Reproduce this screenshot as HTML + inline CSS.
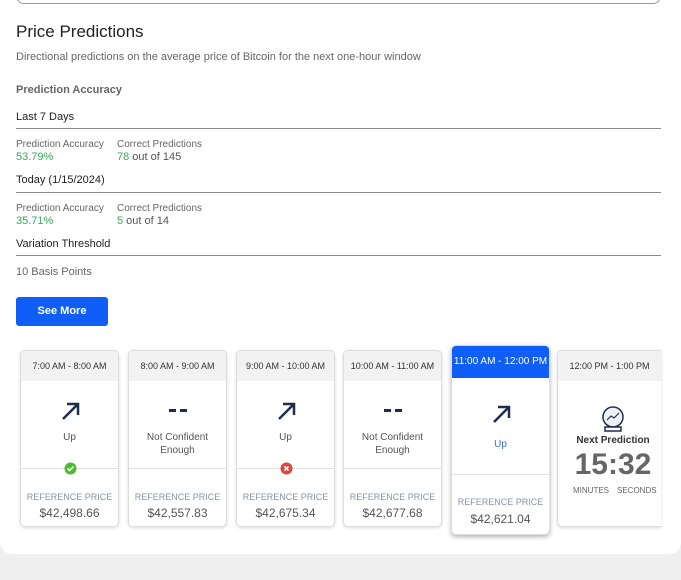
<!DOCTYPE html>
<html><head><meta charset="utf-8"><style>
*{margin:0;padding:0;box-sizing:border-box}
body{width:681px;height:580px;background:#efefef;font-family:"Liberation Sans",sans-serif;position:relative;overflow:hidden;color:#222}
.main{position:absolute;left:0;top:0;width:681px;height:554px;background:#fff;border-radius:0 0 12px 12px}
.a{position:absolute;white-space:nowrap}
.line{position:absolute;left:16px;width:645px;height:1px;background:#8a8a8a}
.sm{font-size:10px;color:#666}
.g{color:#3aa85c}
.card{position:absolute;top:350px;width:99px;height:177px;border:1px solid #ddd;border-radius:5px;background:#fff;box-shadow:0 1px 3px rgba(0,0,0,.15);overflow:hidden;text-align:center}
.hd{height:30px;background:#f2f2f2;font-size:9px;color:#333;line-height:30px}
.arrow{position:absolute;left:0;right:0;top:50px;height:20px}
.lbl{position:absolute;left:0;right:0;top:80px;font-size:10px;color:#555;line-height:13px}
.div{position:absolute;left:0;right:0;top:117px;height:1px;background:#e3e3e3}
.rp{position:absolute;left:0;right:0;top:141px;font-size:9px;color:#8a94a6}
.pr{position:absolute;left:0;right:0;top:155px;font-size:12px;color:#555}
.dash{position:absolute;left:0;right:0;top:58px;height:4px}
</style></head><body>
<div class="main">
<div style="position:absolute;left:16px;top:-20px;width:645px;height:24px;border:1px solid #999;border-radius:8px"></div>
<div class="a" style="left:16px;top:22px;font-size:17px;color:#222">Price Predictions</div>
<div class="a" style="left:16px;top:51px;font-size:11px;color:#666">Directional predictions on the average price of Bitcoin for the next one-hour window</div>
<div class="a" style="left:16px;top:84px;font-size:11px;font-weight:bold;color:#666">Prediction Accuracy</div>
<div class="a" style="left:16px;top:111px;font-size:11px;color:#222">Last 7 Days</div>
<div class="line" style="top:128px"></div>
<div class="a sm" style="left:16px;top:139px">Prediction Accuracy</div>
<div class="a sm" style="left:117px;top:139px">Correct Predictions</div>
<div class="a g" style="left:16px;top:151px;font-size:11px">53.79%</div>
<div class="a" style="left:117px;top:151px;font-size:11px;color:#555"><span class="g">78</span> out of 145</div>
<div class="a" style="left:16px;top:174px;font-size:11px;color:#222">Today (1/15/2024)</div>
<div class="line" style="top:192px"></div>
<div class="a sm" style="left:16px;top:203px">Prediction Accuracy</div>
<div class="a sm" style="left:117px;top:203px">Correct Predictions</div>
<div class="a g" style="left:16px;top:215px;font-size:11px">35.71%</div>
<div class="a" style="left:117px;top:215px;font-size:11px;color:#555"><span class="g">5</span> out of 14</div>
<div class="a" style="left:16px;top:238px;font-size:11px;color:#222">Variation Threshold</div>
<div class="line" style="top:255px"></div>
<div class="a" style="left:16px;top:266px;font-size:11px;color:#666">10 Basis Points</div>
<div class="a" style="left:16px;top:297px;width:92px;height:29px;background:#0f5ef7;border-radius:3px;color:#fff;font-size:11px;font-weight:bold;text-align:center;line-height:29px">See More</div>

<div class="card" style="left:20px"><div class="hd">7:00 AM - 8:00 AM</div>
<svg class="arrow" viewBox="0 0 99 20"><path d="M42 18 L56 4 M46 3 H57 V14" stroke="#1f2d4d" stroke-width="2.5" fill="none"/></svg>
<div class="lbl">Up</div><div class="div"></div>
<svg style="position:absolute;left:43px;top:111px" width="13" height="13"><circle cx="6.5" cy="6.5" r="6" fill="#4cbb2f"/><path d="M3.5 6.5l2 2 4-4" stroke="#fff" stroke-width="1.6" fill="none"/></svg>
<div class="rp">REFERENCE PRICE</div><div class="pr">$42,498.66</div></div>

<div class="card" style="left:128px"><div class="hd">8:00 AM - 9:00 AM</div>
<svg class="dash" viewBox="0 0 99 4"><rect x="40" y="0" width="7" height="3" fill="#1f2d4d"/><rect x="51" y="0" width="7" height="3" fill="#1f2d4d"/></svg>
<div class="lbl">Not Confident<br>Enough</div><div class="div"></div>
<div class="rp">REFERENCE PRICE</div><div class="pr">$42,557.83</div></div>

<div class="card" style="left:236px"><div class="hd">9:00 AM - 10:00 AM</div>
<svg class="arrow" viewBox="0 0 99 20"><path d="M42 18 L56 4 M46 3 H57 V14" stroke="#1f2d4d" stroke-width="2.5" fill="none"/></svg>
<div class="lbl">Up</div><div class="div"></div>
<svg style="position:absolute;left:43px;top:111px" width="13" height="13"><circle cx="6.5" cy="6.5" r="6" fill="#d9473f"/><path d="M4.5 4.5l4 4M8.5 4.5l-4 4" stroke="#fff" stroke-width="1.6"/></svg>
<div class="rp">REFERENCE PRICE</div><div class="pr">$42,675.34</div></div>

<div class="card" style="left:343px"><div class="hd">10:00 AM - 11:00 AM</div>
<svg class="dash" viewBox="0 0 99 4"><rect x="40" y="0" width="7" height="3" fill="#1f2d4d"/><rect x="51" y="0" width="7" height="3" fill="#1f2d4d"/></svg>
<div class="lbl">Not Confident<br>Enough</div><div class="div"></div>
<div class="rp">REFERENCE PRICE</div><div class="pr">$42,677.68</div></div>

<div class="card" style="left:451px;top:345px;height:190px;box-shadow:0 2px 5px rgba(0,0,0,.3)"><div class="hd" style="background:#0f5ef7;color:#fff;font-size:10px;height:32px;line-height:32px">11:00 AM - 12:00 PM</div>
<svg class="arrow" style="top:58px" viewBox="0 0 99 20"><path d="M42 18 L56 4 M46 3 H57 V14" stroke="#1f2d4d" stroke-width="2.5" fill="none"/></svg>
<div class="lbl" style="top:92px;color:#3a6fd8">Up</div><div class="div" style="top:128px"></div>
<div class="rp" style="top:151px">REFERENCE PRICE</div><div class="pr" style="top:166px">$42,621.04</div></div>

<div class="card" style="left:557px;width:104px;border-right:none;border-radius:5px 0 0 5px"><div class="hd" style="padding-right:0">12:00 PM - 1:00 PM</div>
<svg style="position:absolute;left:42px;top:54px" width="26" height="28" viewBox="0 0 26 28"><circle cx="13" cy="12" r="10" fill="#eef2f8" stroke="#1f2d4d" stroke-width="1.5"/><path d="M7 15 l4-4 3 2 5-5" stroke="#1f2d4d" stroke-width="1.2" fill="none"/><path d="M5 22 h16 v4 h-16z" fill="#fff" stroke="#1f2d4d" stroke-width="1.5"/></svg>
<div class="a" style="left:0;width:110px;top:84px;font-size:10px;font-weight:bold;color:#333">Next Prediction</div>
<div class="a" style="left:0;width:110px;top:97px;font-size:30px;font-weight:bold;color:#666">15:32</div>
<div class="a" style="left:15px;top:135px;font-size:8px;color:#666">MINUTES</div>
<div class="a" style="left:59px;top:135px;font-size:8px;color:#666">SECONDS</div></div>
</div>
</body></html>
